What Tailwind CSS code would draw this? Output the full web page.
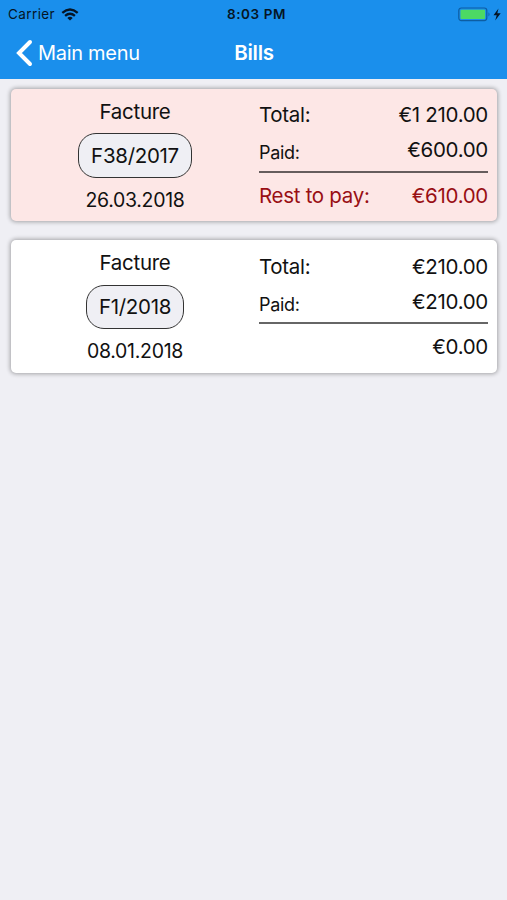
<!DOCTYPE html>
<html lang="en">
<head>
<meta charset="utf-8">
<title>Bills</title>
<script src="https://cdn.jsdelivr.net/npm/@tailwindcss/browser@4"></script>
</head>
<body class="h-[900px] w-[507px] overflow-hidden bg-[#efeff4] font-['Inter',sans-serif] text-[20.5px] tracking-[-0.3px] text-[#111]">
<header class="h-[79px] bg-[#1a8fec]">
  <div class="grid h-[28px] grid-cols-3 items-center pr-[5px] pl-2 text-[13.5px] text-[#051525]">
    <div class="flex items-center gap-[6px] tracking-[0.4px]"><span>Carrier</span>
      <svg class="h-[13px] w-[18px]" viewBox="0 0 18 13" fill="none" stroke="#051525" stroke-width="2.3"><path d="M1.3 4.9Q9-1.9 16.7 4.9M4.1 7.9Q9 3.6 13.9 7.9"/><path d="M6.3 10Q9 7.7 11.7 10L9 12.6Z" fill="#051525" stroke="none"/></svg>
    </div>
    <div class="pl-[3px] text-center font-semibold tracking-[0.6px]">8:03 PM</div>
    <div class="flex items-center justify-end">
      <svg class="h-[15px] w-[44px]" viewBox="0 0 44 15"><rect x=".8" y="1" width="28" height="12.6" rx="2.5" fill="none" stroke="#0d5da2" stroke-width="1.2"/><rect x="2.5" y="2.7" width="24.6" height="9.2" rx="1" fill="#4cd964"/><path d="M30.5 5.2q2 2.1 0 4.2z" fill="#0d5da2"/><path d="M40.5 1.5 35.5 8.2h3.2l-1.5 5.3 5.5-7.3h-3.4z" fill="#051525"/></svg>
    </div>
  </div>
  <div class="grid h-[50px] grid-cols-[1fr_auto_1fr] items-center pl-[15px] pr-[14px] text-white">
    <div class="flex items-center gap-[4px] text-[20px]">
      <svg class="h-[28px] w-[19px]" viewBox="0 0 19 28" fill="none" stroke="white" stroke-width="4" stroke-linecap="round"><path d="M15 3 4 14 15 25"/></svg>
      <span>Main menu</span>
    </div>
    <h1 class="font-semibold">Bills</h1>
    <span></span>
  </div>
</header>
<main class="flex flex-col gap-[19px] pt-[10px] pr-[10px] pl-[11px]">
  <section class="flex h-[132px] rounded-[5px] bg-[#fde7e6] shadow-[0_0_4px_1px_rgba(0,0,0,0.32)]">
    <div class="flex w-[248px] flex-col items-center pt-[10px] leading-[26px]">
      <div>Facture</div>
      <div class="mt-[8px] flex h-[45px] items-center rounded-[18px] border border-[#333] bg-[#efeff4] px-[12px]">F38/2017</div>
      <div class="mt-[9px] text-[19.5px]">26.03.2018</div>
    </div>
    <div class="mr-[9px] flex-1 pt-[13px] leading-[26px]">
      <div class="flex justify-between"><span>Total:</span><span>€1 210.00</span></div>
      <div class="mt-[9px] flex justify-between"><span class="pt-[3px] text-[18px]">Paid:</span><span>€600.00</span></div>
      <div class="mt-[5px] h-[2px] bg-[#665d5d]"></div>
      <div class="mt-[10px] flex justify-between text-[#990f14]"><span>Rest to pay:</span><span>€610.00</span></div>
    </div>
  </section>
  <section class="flex h-[133px] rounded-[5px] bg-white shadow-[0_0_4px_1px_rgba(0,0,0,0.32)]">
    <div class="flex w-[248px] flex-col items-center pt-[10px] leading-[26px]">
      <div>Facture</div>
      <div class="mt-[9px] flex h-[44px] items-center rounded-[18px] border border-[#333] bg-[#efeff4] px-[12px]">F1/2018</div>
      <div class="mt-[9px] text-[19.5px]">08.01.2018</div>
    </div>
    <div class="mr-[9px] flex-1 pt-[14px] leading-[26px]">
      <div class="flex justify-between"><span>Total:</span><span>€210.00</span></div>
      <div class="mt-[9px] flex justify-between"><span class="pt-[3px] text-[18px]">Paid:</span><span>€210.00</span></div>
      <div class="mt-[4px] h-[2px] bg-[#666]"></div>
      <div class="mt-[10px] flex justify-end"><span>€0.00</span></div>
    </div>
  </section>
</main>
</body>
</html>
